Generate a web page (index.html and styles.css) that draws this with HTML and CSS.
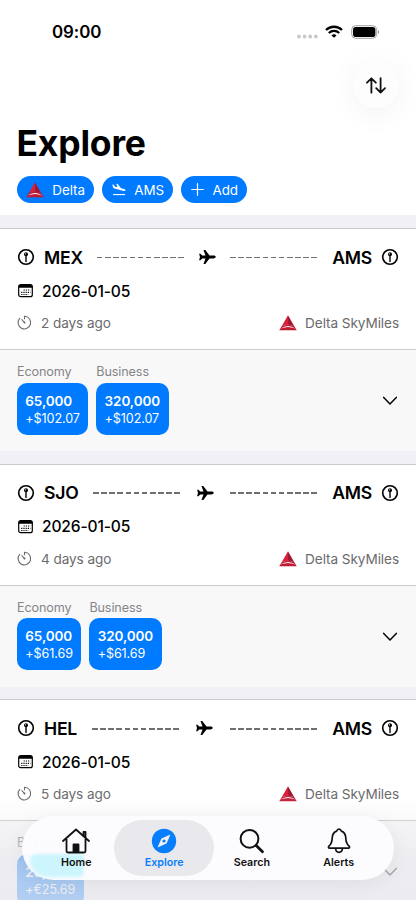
FILE: index.html
```html
<!DOCTYPE html>
<html lang="en">
<head>
<meta charset="utf-8">
<meta name="viewport" content="width=device-width, initial-scale=1">
<title>Explore</title>
<link rel="stylesheet" href="styles.css">
</head>
<body>
<svg class="defs" aria-hidden="true">
  <defs>
    <symbol id="pin" viewBox="0 0 18 18"><circle cx="9" cy="9" r="7.3" fill="none" stroke="currentColor" stroke-width="1.6"/><circle cx="9" cy="6.3" r="2" fill="currentColor"/><path d="M9 7v6.6" stroke="currentColor" stroke-width="1.4" stroke-linecap="round"/><circle cx="8.6" cy="5.8" r=".6" fill="#fff"/></symbol>
    <symbol id="calendar" viewBox="0 0 16 14"><rect x=".7" y=".7" width="13.6" height="12" rx="2" fill="none" stroke="currentColor" stroke-width="1.2"/><path d="M.7 3.8V2.6A2 2 0 0 1 2.7.7h9.6a2 2 0 0 1 2 1.9v1.2z" fill="currentColor"/><path d="M5.6 6h6.8M3.2 8.3h9.2M3.2 10.5h7" stroke="currentColor" stroke-width="1.2" stroke-dasharray="1.2 1"/></symbol>
    <symbol id="timer" viewBox="0 0 16 16"><path d="M7.5 3.8V1.3A6.3 6.3 0 1 1 2.7 3.400M7.6 7.7 4.8 4.6" fill="none" stroke="currentColor" stroke-width="1.1" stroke-linecap="round"/><circle cx="7.5" cy="7.5" r="1" fill="currentColor"/></symbol>
    <symbol id="delta" viewBox="0 0 18 16"><path d="M9 .3 2.700 11.300Q6.500 9.800 9 9.800z" fill="#d9203a"/><path d="M9 .3v9.500Q11.500 9.800 15.300 11.300z" fill="#a31733"/><path d="M2.700 11.200Q6 9.700 9 9.700t6.300 1.500l2.500 4.100H.2z" fill="#c01a35"/><path class="delta-gap" d="M1.700 13.500Q5.500 11 9 10.900t7.300 2.600Q12 12 9 12t-7.300 1.500z"/></symbol>
    <symbol id="plane" viewBox="0 0 18 16"><path d="M17.7 8c0-.9-1.1-1.4-2.5-1.4h-3.7L7.3.9H5.5l2 5.7H4.1L2.5 4.7H1.1L2 8l-.9 3.3h1.4l1.6-1.9h3.4l-2 5.7h1.8l4.2-5.7h3.7c1.4 0 2.5-.5 2.5-1.4z" fill="currentColor"/></symbol>
    <symbol id="chevron" viewBox="0 0 16 10"><path d="m1.700 1.400 6.300 6.500 6.300-6.500" fill="none" stroke="currentColor" stroke-width="1.5" stroke-linecap="round" stroke-linejoin="round"/></symbol>
  </defs>
</svg>
<div class="screen">
  <header class="status">
    <span class="clock">09:00</span>
    <span class="signals">
      <svg width="21" height="5" viewBox="0 0 21 5" fill="#c9c9c9"><circle cx="2" cy="2.5" r="1.9"/><circle cx="7.6" cy="2.5" r="1.9"/><circle cx="13.2" cy="2.5" r="1.9"/><circle cx="18.8" cy="2.5" r="1.9"/></svg>
      <svg class="wifi" width="18" height="13" viewBox="0 0 18 13" fill="none" stroke="#000" stroke-width="2.3"><path d="M1 5a11.5 11.5 0 0 1 16 0M3.8 8a7.5 7.5 0 0 1 10.4 0"/><path d="M9 12.8 6.5 10.4a3.6 3.6 0 0 1 5 0z" fill="#000" stroke="none"/></svg>
      <svg class="battery" width="29" height="14" viewBox="0 0 29 14"><rect x=".7" y=".7" width="25" height="12.6" rx="4" fill="none" stroke="#a0a0a0" stroke-width="1"/><rect x="2" y="2" width="22.4" height="10" rx="2.8"/><path d="M27 5v4q1-.6 1-2t-1-2z" fill="#888"/></svg>
    </span>
  </header>
  <div class="toolbar"><button class="sort" aria-label="Sort"><svg width="20" height="17" viewBox="0 0 20 17" fill="none" stroke="#111" stroke-width="1.8" stroke-linecap="round" stroke-linejoin="round"><path d="M5.4 15.7V1.5M1 5.7l4.4-4.4 4.4 4.4M14.6 1.2v14.3M10.2 11.2l4.4 4.4 4.4-4.4"/></svg></button></div>
  <h1 class="title">Explore</h1>
  <div class="filters">
    <button class="pill pill-delta"><svg width="18" height="16"><use href="#delta"/></svg><span>Delta</span></button>
    <button class="pill pill-airport"><svg width="14" height="13" viewBox="0 0 14 13" fill="#fff"><path d="M.5 1.400 1.500 1.500 2.800 3.400l2.700.8L4.300.700l1.400.3 3.400 4.200 3 .8c1 .3 1.500.8 1.300 1.400-.2.6-1 .7-1.900.500L2.600 5.600C1.400 5.200.900 4.700.8 3.800z"/><path d="M1 11h12v1.100H1z"/></svg><span>AMS</span></button>
    <button class="pill pill-add"><svg width="13" height="13" viewBox="0 0 13 13" fill="none" stroke="#fff" stroke-width="1.2" stroke-linecap="round"><path d="M6.500.700v11.600M.700 6.500h11.600"/></svg><span>Add</span></button>
  </div>
  <main class="list">
    <article class="card">
      <section class="summary">
        <div class="route"><svg class="pin"><use href="#pin"/></svg><b class="code">MEX</b><div class="path"><i class="dashes"></i><svg class="plane"><use href="#plane"/></svg><i class="dashes"></i></div><b class="code">AMS</b><svg class="pin"><use href="#pin"/></svg></div>
        <div class="date"><svg class="cal"><use href="#calendar"/></svg><span>2026-01-05</span></div>
        <div class="meta"><svg class="timer"><use href="#timer"/></svg><span>2 days ago</span><svg class="logo"><use href="#delta"/></svg><span class="program">Delta SkyMiles</span></div>
      </section>
      <section class="fares">
        <div class="fare"><span class="cabin">Economy</span><div class="price"><b>65,000</b><span>+$102.07</span></div></div>
        <div class="fare"><span class="cabin">Business</span><div class="price"><b>320,000</b><span>+$102.07</span></div></div>
        <svg class="chevron"><use href="#chevron"/></svg>
      </section>
    </article>
    <article class="card">
      <section class="summary">
        <div class="route"><svg class="pin"><use href="#pin"/></svg><b class="code">SJO</b><div class="path"><i class="dashes"></i><svg class="plane"><use href="#plane"/></svg><i class="dashes"></i></div><b class="code">AMS</b><svg class="pin"><use href="#pin"/></svg></div>
        <div class="date"><svg class="cal"><use href="#calendar"/></svg><span>2026-01-05</span></div>
        <div class="meta"><svg class="timer"><use href="#timer"/></svg><span>4 days ago</span><svg class="logo"><use href="#delta"/></svg><span class="program">Delta SkyMiles</span></div>
      </section>
      <section class="fares">
        <div class="fare"><span class="cabin">Economy</span><div class="price"><b>65,000</b><span>+$61.69</span></div></div>
        <div class="fare"><span class="cabin">Business</span><div class="price"><b>320,000</b><span>+$61.69</span></div></div>
        <svg class="chevron"><use href="#chevron"/></svg>
      </section>
    </article>
    <article class="card">
      <section class="summary">
        <div class="route"><svg class="pin"><use href="#pin"/></svg><b class="code">HEL</b><div class="path"><i class="dashes"></i><svg class="plane"><use href="#plane"/></svg><i class="dashes"></i></div><b class="code">AMS</b><svg class="pin"><use href="#pin"/></svg></div>
        <div class="date"><svg class="cal"><use href="#calendar"/></svg><span>2026-01-05</span></div>
        <div class="meta"><svg class="timer"><use href="#timer"/></svg><span>5 days ago</span><svg class="logo"><use href="#delta"/></svg><span class="program">Delta SkyMiles</span></div>
      </section>
      <section class="fares">
        <div class="fare"><span class="cabin">Business</span><div class="price"><b>25,000</b><span>+€25.69</span></div></div>
        <svg class="chevron"><use href="#chevron"/></svg>
      </section>
    </article>
  </main>
  <div class="fade"></div>
  <nav class="tabs">
    <a class="tab"><svg width="28" height="26" viewBox="0 0 28 26" fill="none" stroke="#111" stroke-width="1.8" stroke-linecap="round" stroke-linejoin="round"><path d="M1 13 14 1.500 27 13M4.500 11v12q0 1.500 1.500 1.500h16q1.500 0 1.500-1.500V11M21.500 7.500V4h2v5.500"/><path d="M11.500 24v-7.500h5V24z" fill="#111"/></svg><span>Home</span></a>
    <a class="tab active"><svg width="26" height="26" viewBox="0 0 26 26"><circle cx="13" cy="13" r="12.200" fill="#087efc"/><path d="m19.500 6.500-4 9-9 4 4-9z" fill="#f1f2f7"/><circle cx="13" cy="13" r="1.600" fill="#087efc"/></svg><span>Explore</span></a>
    <a class="tab"><svg width="26" height="26" viewBox="0 0 26 26" fill="none" stroke="#111" stroke-linecap="round"><circle cx="10.500" cy="10.800" r="8.900" stroke-width="2"/><path d="m17.200 17.500 6.300 6.300" stroke-width="2.800"/></svg><span>Search</span></a>
    <a class="tab"><svg width="26" height="26" viewBox="0 0 26 26" fill="none" stroke="#111" stroke-width="1.700" stroke-linejoin="round"><path d="M13 1.200c-1.200 0-2 .8-2.300 1.900C7.400 4.200 6.300 7 6.200 10c-.1 4.500-.8 6-3.300 8.200-.8.800-.5 2 .7 2h18.800c1.200 0 1.500-1.200.7-2-2.500-2.200-3.200-3.700-3.300-8.200-.1-3-1.200-5.800-4.500-6.900-.3-1.100-1.100-1.900-2.300-1.900zM9.500 20.500c.3 2.500 1.500 3.800 3.500 3.800s3.200-1.300 3.500-3.800"/></svg><span>Alerts</span></a>
  </nav>
</div>
</body>
</html>
```
FILE: styles.css
```css
* { box-sizing: border-box; }
body { margin: 0; font-family: Inter, "Liberation Sans", sans-serif; color: #000; background: #fff; }
button { border: 0; font: inherit; padding: 0; }
svg { display: block; flex: none; }
.defs { position: absolute; width: 0; height: 0; }
.screen { position: relative; width: 416px; height: 900px; overflow: hidden; background: #fff; }
.status { height: 62px; padding: 2px 36px 0 52px; display: flex; align-items: center; justify-content: space-between; }
.clock { font-size: 16.9px; font-weight: 600; letter-spacing: -.05px; }
.signals { display: flex; align-items: center; margin-top: -1px; }
.signals > svg:first-child { margin-left: 1px; margin-top: 9px; }
.wifi { margin-left: 7px; }
.battery { margin-left: 8px; }
.toolbar { height: 54px; padding-right: 17px; display: flex; justify-content: flex-end; }
.sort { width: 46px; height: 46px; border-radius: 50%; background: #fdfdfd; box-shadow: 0 5px 32px rgba(0,0,0,.06); display: grid; place-items: center; }
.title { margin: 5px 0 0 16.500px; height: 44px; line-height: 45px; font-size: 35.500px; font-weight: 700; letter-spacing: -.2px; }
.filters { margin: 11px 0 0 17px; display: flex; gap: 8px; height: 27px; }
.pill { height: 27px; border-radius: 14px; background: #007aff; color: #fff; display: flex; align-items: center; justify-content: space-between; font-size: 13.400px; letter-spacing: -.05px; padding: 0 8.500px 0 9px; }
.pill-delta { width: 76.500px; }
.pill-delta .delta-gap { fill: #007aff; }
.pill-airport { width: 71px; padding-left: 10px; }
.pill-add { width: 66px; padding-left: 10px; }
.list { margin-top: 12px; padding-top: 13px; background: #f1f0f6; }
.card { height: 235.700px; }
.summary { height: 122px; padding: 17px 17px 0; background: #fff; border: solid #cbcbce; border-width: 1px 0; }
.route { display: flex; align-items: center; height: 22px; }
.pin { width: 18px; height: 18px; }
.code { font-size: 17.600px; font-weight: 600; letter-spacing: -.2px; margin-left: 9px; }
.path + .code { margin: 0 9px 0 0; }
.path { flex: 1; display: flex; align-items: center; justify-content: space-between; padding: 0 15px 0 14.500px; }
.dashes { width: 87px; height: 1.500px; margin-top: 1px; background: repeating-linear-gradient(90deg, #707070 0 5.500px, transparent 5.500px 8.150px); }
.plane { width: 18px; height: 16px; }
.date { display: flex; align-items: center; height: 20px; margin-top: 13px; font-size: 15.600px; letter-spacing: -.15px; font-weight: 500; }
.cal { width: 16px; height: 14px; margin: 0 8px 0 1px; }
.meta { display: flex; align-items: center; height: 20px; margin-top: 12px; font-size: 13.600px; letter-spacing: -.08px; color: #6b6b6d; }
.timer { width: 16px; height: 16px; margin-right: 8px; }
.logo { width: 18px; height: 16px; margin-left: auto; margin-right: 8.500px; }
.delta-gap { fill: #fff; }
.fares { height: 101px; padding: 14px 17px 0; display: flex; gap: 8px; background: #f8f8f8; }
.cabin { display: block; height: 18.700px; line-height: 16px; font-size: 12.600px; letter-spacing: -.1px; color: #858588; }
.price { height: 52px; border-radius: 10px; background: #007aff; color: #fff; padding: 9px 8.500px 0 8.300px; font-size: 12.600px; letter-spacing: -.1px; line-height: 18px; }
.price b, .price span { display: block; }
.price b { font-size: 13.500px; font-weight: 600; letter-spacing: -.1px; }
.chevron { width: 16px; height: 10px; margin: 32px 1px 0 auto; }
.fade { position: absolute; left: 0; right: 0; top: 795px; height: 105px; background: linear-gradient(rgba(232,232,238,0), rgba(232,232,238,.250) 25%, rgba(232,232,238,.7) 65%, rgba(232,232,238,.77)); }
.tabs { position: absolute; left: 22px; top: 816px; width: 372px; height: 64px; padding: 4px; border-radius: 32px; background: rgba(252,252,255,.96); box-shadow: 0 4px 20px rgba(0,0,0,.06); display: flex; justify-content: space-between; }
.tabs::before { content: ""; position: absolute; left: 8px; top: 38px; width: 54px; height: 23px; border-radius: 8px 4px 8px 24px; background: #cdf5fd; filter: blur(1.500px); }
.tab { position: relative; width: 102px; margin-right: -12.800px; height: 56px; border-radius: 28px; display: flex; flex-direction: column; align-items: center; padding-top: 8px; font-size: 10.700px; line-height: 14px; font-weight: 600; color: #111; }
.tab:last-child { margin-right: 0; left: -1px; }
.tab span { margin-top: 2px; }
.active { background: #e9e9ed; color: #087efc; }
```
